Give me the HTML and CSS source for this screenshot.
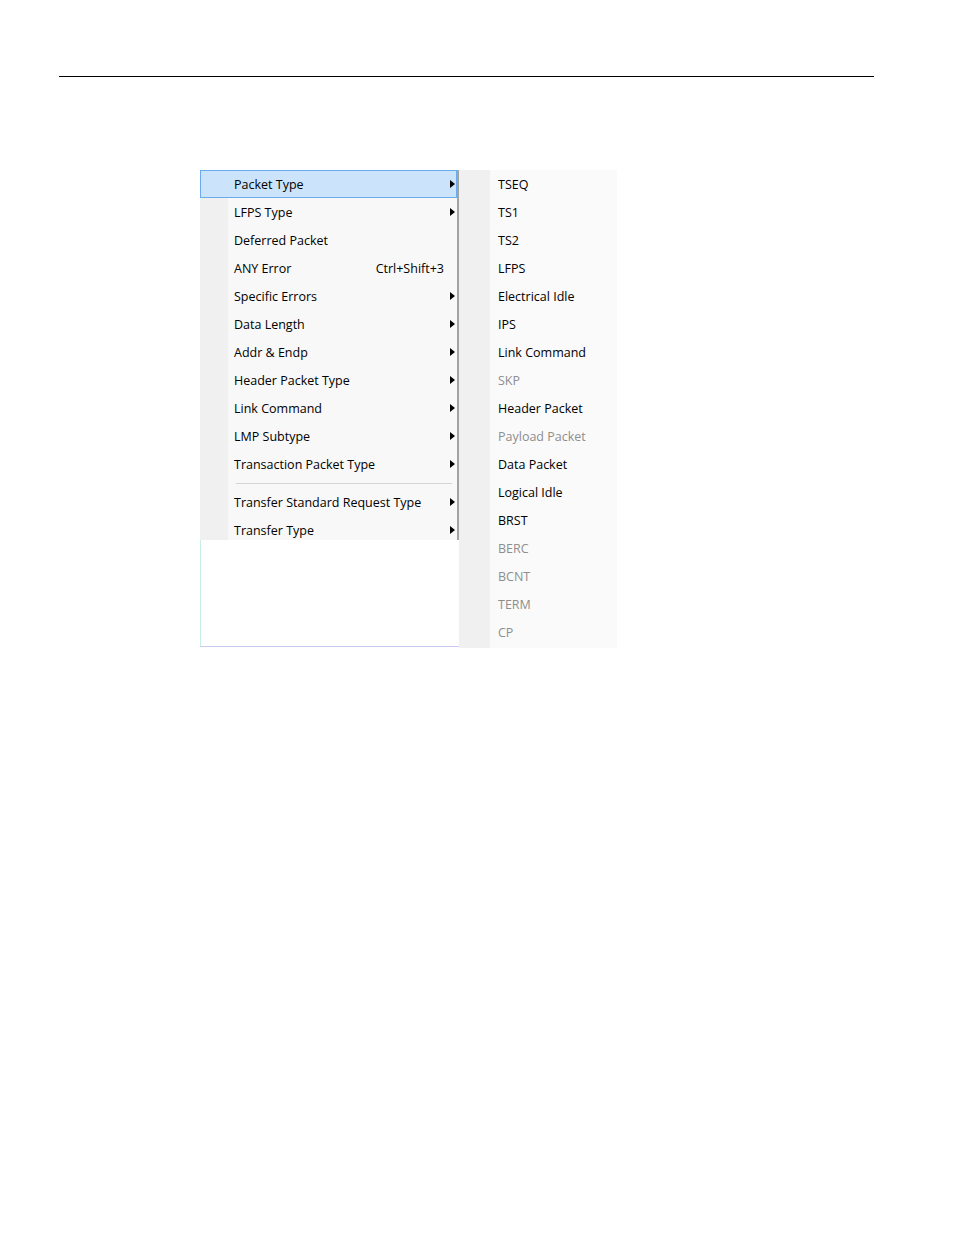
FILE: index.html
```html
<!DOCTYPE html>
<html lang="en">
<head>
    <meta charset="UTF-8">
    <title>Filter Menu</title>
    <link rel="stylesheet" href="styles.css">
</head>
<body>
    <div class="page-rule"></div>

    <div class="menus">
        <!-- Main context menu -->
        <div class="menu-col">
            <div class="menu">
                <div class="item active"><span>Packet Type</span><i class="arrow"></i></div>
                <div class="item"><span>LFPS Type</span><i class="arrow"></i></div>
                <div class="item"><span>Deferred Packet</span></div>
                <div class="item"><span>ANY Error</span><span class="shortcut">Ctrl+Shift+3</span></div>
                <div class="item"><span>Specific Errors</span><i class="arrow"></i></div>
                <div class="item"><span>Data Length</span><i class="arrow"></i></div>
                <div class="item"><span>Addr &amp; Endp</span><i class="arrow"></i></div>
                <div class="item"><span>Header Packet Type</span><i class="arrow"></i></div>
                <div class="item"><span>Link Command</span><i class="arrow"></i></div>
                <div class="item"><span>LMP Subtype</span><i class="arrow"></i></div>
                <div class="item"><span>Transaction Packet Type</span><i class="arrow"></i></div>
                <div class="separator"></div>
                <div class="item"><span>Transfer Standard Request Type</span><i class="arrow"></i></div>
                <div class="item"><span>Transfer Type</span><i class="arrow"></i></div>
            </div>
            <div class="menu-blank"></div>
        </div>

        <!-- Packet Type submenu -->
        <div class="submenu">
            <div class="item">TSEQ</div>
            <div class="item">TS1</div>
            <div class="item">TS2</div>
            <div class="item">LFPS</div>
            <div class="item">Electrical Idle</div>
            <div class="item">IPS</div>
            <div class="item">Link Command</div>
            <div class="item disabled">SKP</div>
            <div class="item">Header Packet</div>
            <div class="item disabled">Payload Packet</div>
            <div class="item">Data Packet</div>
            <div class="item">Logical Idle</div>
            <div class="item">BRST</div>
            <div class="item disabled">BERC</div>
            <div class="item disabled">BCNT</div>
            <div class="item disabled">TERM</div>
            <div class="item disabled">CP</div>
        </div>
    </div>
</body>
</html>
```

FILE: styles.css
```css
body {
    margin: 0;
    padding: 0;
    background-color: #fff;
    font-family: "Open Sans", "Noto Sans", Arial, sans-serif;
    font-size: 12.5px;
    color: #000;
}
.page-rule {
    margin: 76px 0 0 59px;
    width: 815px;
    border-top: 1px solid #000;
}
.menus {
    display: flex;
    margin: 93px 0 0 200px;
}
.menu-col {
    width: 259px;
}
.menu {
    height: 370px;
    overflow: hidden;
    background: linear-gradient(to right, #f0f0f0 28px, #f8f8f8 28px);
    border-right: 2px solid #a3a3a3;
}
.menu .item {
    display: flex;
    align-items: center;
    justify-content: space-between;
    box-sizing: border-box;
    height: 28px;
    padding: 1px 1px 0 33px;
    border: 1px solid transparent;
}
.menu .item.active {
    background-color: #cce4fb;
    border-color: #6aabee;
}
.shortcut {
    margin-right: 11px;
}
.arrow {
    width: 0;
    height: 0;
    border-top: 4px solid transparent;
    border-bottom: 4px solid transparent;
    border-left: 5px solid #000;
    margin-bottom: 1px;
}
.separator {
    height: 10px;
    margin: 0 5px 0 36px;
    box-sizing: border-box;
    padding-top: 5px;
}
.separator::after {
    content: "";
    display: block;
    border-top: 1px solid #d5d5d5;
}
.menu-blank {
    height: 106px;
    border-left: 1px solid #c8efe6;
    border-bottom: 1px solid #c9c9f2;
}
.submenu {
    width: 158px;
    height: 478px;
    background: linear-gradient(to right, #f0f0f0 31px, #fafafa 31px);
}
.submenu .item {
    height: 28px;
    line-height: 30px;
    padding-left: 39px;
}
.submenu .item.disabled {
    color: #8e8e8e;
}
```
